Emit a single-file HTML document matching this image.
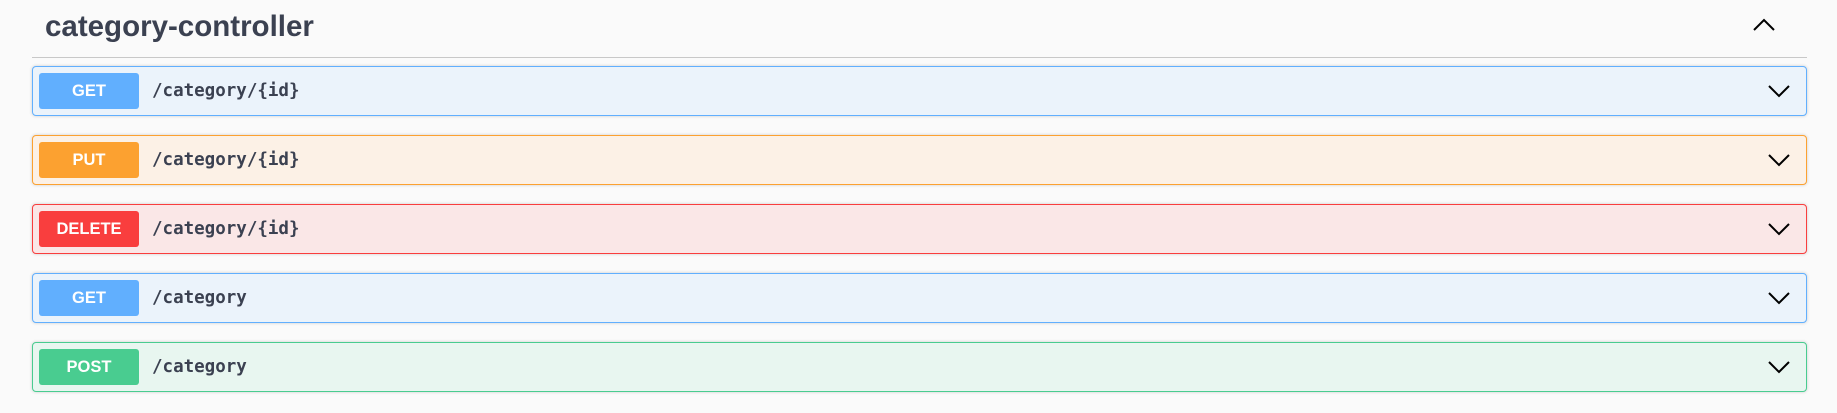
<!DOCTYPE html>
<html><head><style>
body{margin:0;background:#fafafa;width:1837px;height:413px;overflow:hidden;font-family:"Liberation Sans",sans-serif;position:relative}
h3{position:absolute;left:45px;top:5px;margin:0;font-size:29.5px;font-weight:bold;color:#3b4151;line-height:44px}
.hr{position:absolute;left:32px;width:1775px;top:57px;height:1px;background:#c8c8c8}
.op{position:absolute;left:32px;width:1773px;height:48px;border:1px solid;border-radius:4px;box-shadow:0 0 3px rgba(0,0,0,.19)}
.b{position:absolute;left:6px;top:6px;width:100px;height:36px;border-radius:3px;color:#fff;font-weight:bold;font-size:16.5px;text-align:center;line-height:36px}
.p{position:absolute;left:119px;top:0;line-height:48px;font-family:"DejaVu Sans Mono","Liberation Mono",monospace;font-weight:bold;font-size:17.5px;color:#3b4151}
.c{position:absolute;right:15px;top:15px}
</style></head><body>
<h3>category-controller</h3>
<svg style="position:absolute;left:1752px;top:18px" width="24" height="16"><path d="M2 12 L12 2 L22 12" fill="none" stroke="#000" stroke-width="2"/></svg>
<div class="hr"></div>

<div class="op" style="top:66px;background:#ebf3fb;border-color:#61affe"><div class="b" style="background:#61affe">GET</div><div class="p">/category/{id}</div><svg class="c" width="24" height="16"><path d="M2 4 L12 14 L22 4" fill="none" stroke="#000" stroke-width="2"/></svg></div>
<div class="op" style="top:135px;background:#fcf1e6;border-color:#fca130"><div class="b" style="background:#fca130">PUT</div><div class="p">/category/{id}</div><svg class="c" width="24" height="16"><path d="M2 4 L12 14 L22 4" fill="none" stroke="#000" stroke-width="2"/></svg></div>
<div class="op" style="top:204px;background:#fae7e7;border-color:#f93e3e"><div class="b" style="background:#f93e3e">DELETE</div><div class="p">/category/{id}</div><svg class="c" width="24" height="16"><path d="M2 4 L12 14 L22 4" fill="none" stroke="#000" stroke-width="2"/></svg></div>
<div class="op" style="top:273px;background:#ebf3fb;border-color:#61affe"><div class="b" style="background:#61affe">GET</div><div class="p">/category</div><svg class="c" width="24" height="16"><path d="M2 4 L12 14 L22 4" fill="none" stroke="#000" stroke-width="2"/></svg></div>
<div class="op" style="top:342px;background:#e8f6f0;border-color:#49cc90"><div class="b" style="background:#49cc90">POST</div><div class="p">/category</div><svg class="c" width="24" height="16"><path d="M2 4 L12 14 L22 4" fill="none" stroke="#000" stroke-width="2"/></svg></div>
</body></html>
